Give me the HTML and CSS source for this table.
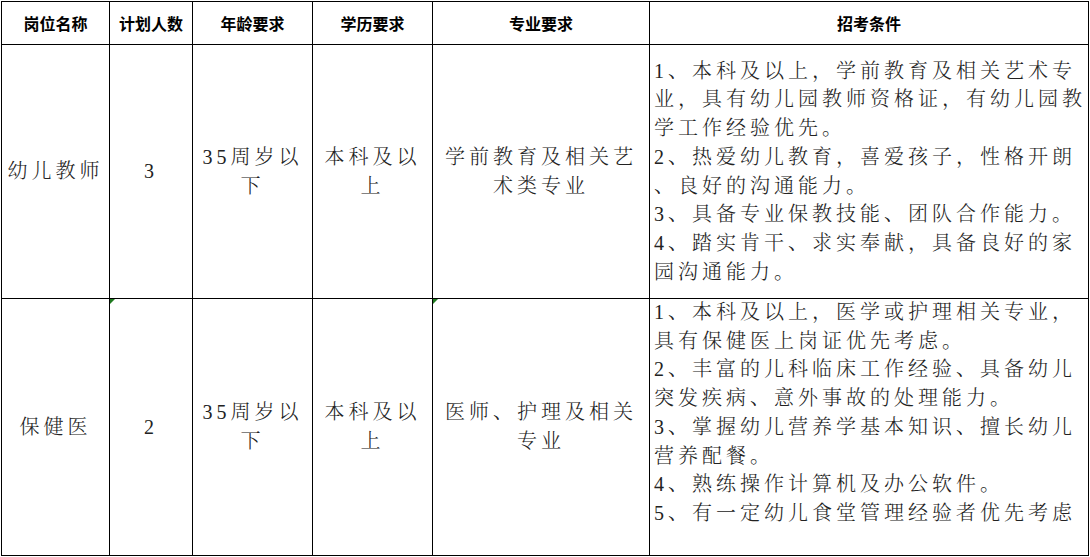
FILE: index.html
```html
<!DOCTYPE html>
<html lang="zh-CN">
<head>
<meta charset="utf-8">
<title>招聘岗位</title>
<link rel="stylesheet" href="styles.css">
</head>
<body>
<div class="sheet">
  <div class="cell head">岗位名称</div>
  <div class="cell head">计划人数</div>
  <div class="cell head">年龄要求</div>
  <div class="cell head">学历要求</div>
  <div class="cell head">专业要求</div>
  <div class="cell head">招考条件</div>

  <div class="cell body">幼儿教师</div>
  <div class="cell body">3</div>
  <div class="cell body">35周岁以<br>下</div>
  <div class="cell body">本科及以<br>上</div>
  <div class="cell body">学前教育及相关艺<br>术类专业</div>
  <div class="cell body cond">
    <div class="text">1、本科及以上，学前教育及相关艺术专<br>业，具有幼儿园教师资格证，有幼儿园教<br>学工作经验优先。<br>2、热爱幼儿教育，喜爱孩子，性格开朗<br>、良好的沟通能力。<br>3、具备专业保教技能、团队合作能力。<br>4、踏实肯干、求实奉献，具备良好的家<br>园沟通能力。</div>
  </div>

  <div class="cell body">保健医</div>
  <div class="cell body flag">2</div>
  <div class="cell body">35周岁以<br>下</div>
  <div class="cell body">本科及以<br>上</div>
  <div class="cell body flag">医师、护理及相关<br>专业</div>
  <div class="cell body cond top">
    <div class="text">1、本科及以上，医学或护理相关专业，<br>具有保健医上岗证优先考虑。<br>2、丰富的儿科临床工作经验、具备幼儿<br>突发疾病、意外事故的处理能力。<br>3、掌握幼儿营养学基本知识、擅长幼儿<br>营养配餐。<br>4、熟练操作计算机及办公软件。<br>5、有一定幼儿食堂管理经验者优先考虑</div>
  </div>
</div>
</body>
</html>
```

FILE: styles.css
```css
html, body {
  margin: 0;
  padding: 0;
  background: #ffffff;
}

body {
  padding: 1px 0 0 1px;
}

.sheet {
  display: grid;
  grid-template-columns: 107px 82px 119px 119px 216px 438px;
  grid-template-rows: 42px 253px 256px;
  gap: 1px;
  padding: 1px;
  background: #000000;
  width: max-content;
}

.cell {
  background: #ffffff;
  display: flex;
  align-items: center;
  justify-content: center;
  text-align: center;
  overflow: hidden;
  position: relative;
}

.head {
  font-family: "Noto Sans CJK SC", "Liberation Sans", sans-serif;
  font-weight: 700;
  font-size: 16px;
  color: #000000;
}

.body {
  font-family: "Liberation Serif", "Noto Serif CJK SC", "Noto Sans CJK SC", serif;
  font-weight: 300;
  font-size: 20px;
  letter-spacing: 4px;
  line-height: 28.7px;
  color: #222222;
  white-space: nowrap;
}

.cond {
  justify-content: flex-start;
  text-align: left;
  padding-left: 4px;
}

.cond.top {
  align-items: flex-start;
}

.cond.top .text {
  margin-top: -1px;
}

.flag::before {
  content: "";
  position: absolute;
  left: 0;
  top: 0;
  width: 0;
  height: 0;
  border-top: 5px solid #1f7a1f;
  border-right: 5px solid transparent;
}
```
